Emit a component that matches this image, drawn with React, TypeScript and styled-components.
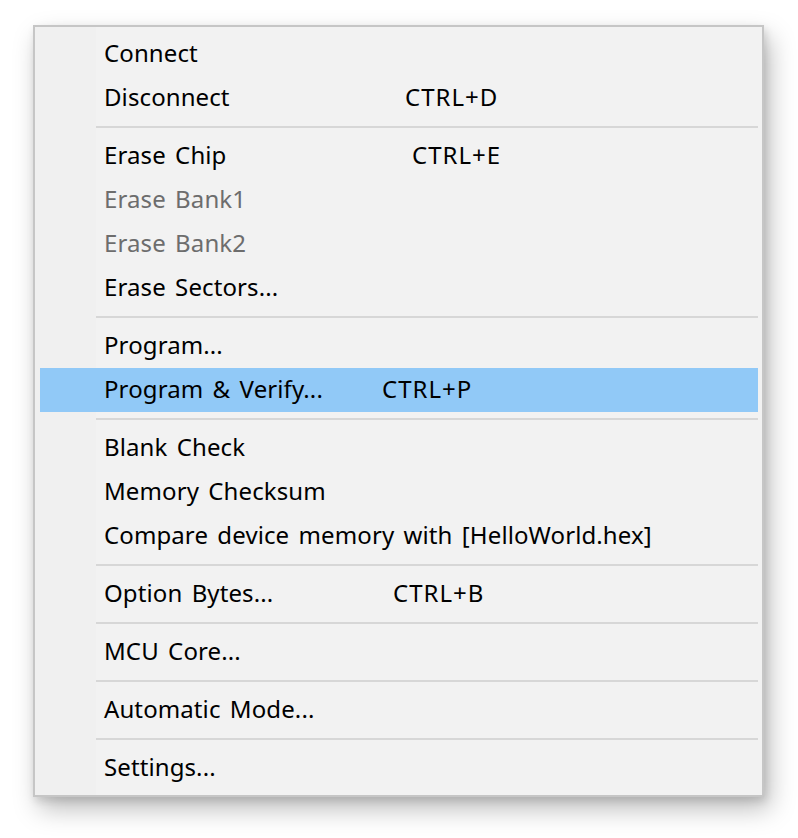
import React from "react";
import styled, { createGlobalStyle } from "styled-components";

const Global = createGlobalStyle`
  html, body { margin: 0; padding: 0; background: #ffffff; }
  body { font-family: "Noto Sans", "Open Sans", sans-serif; }
`;

const Page = styled.div`
  box-sizing: border-box;
  min-height: 838px;
  padding: 25px 0 0 33px;
`;

const Menu = styled.div`
  width: 731px;
  box-sizing: border-box;
  border: 2px solid #c6c6c6;
  background: linear-gradient(to right, #f0f0f0 0, #f0f0f0 61px, #f2f2f2 61px);
  padding: 5px 4px 5px 5px;
  box-shadow: 6px 12px 24px rgba(0, 0, 0, 0.26), 2px 4px 8px rgba(0, 0, 0, 0.12);
  display: flex;
  flex-direction: column;
`;

const Item = styled.div<{ $active?: boolean; $disabled?: boolean }>`
  height: 44px;
  box-sizing: border-box;
  display: flex;
  align-items: center;
  padding: 0 0 2px 64px;
  font-size: 24px;
  line-height: 32px;
  letter-spacing: 0.1px;
  word-spacing: 3px;
  white-space: nowrap;
  color: ${(p) => (p.$disabled ? "#6d6d6d" : "#000000")};
  background: ${(p) => (p.$active ? "#91c9f7" : "transparent")};
`;

const Label = styled.span<{ $width?: number }>`
  display: inline-block;
  min-width: ${(p) => (p.$width ? `${p.$width}px` : "0")};
`;

const Shortcut = styled.span`
  letter-spacing: 1px;
`;

const Separator = styled.div`
  height: 14px;
  display: flex;
  align-items: center;
  padding-left: 56px;
  &::after {
    content: "";
    flex: 1;
    height: 2px;
    background: #d7d7d7;
  }
`;

type Entry =
  | { sep: true }
  | { label: string; shortcut?: string; at?: number; disabled?: boolean; active?: boolean };

const entries: Entry[] = [
  { label: "Connect" },
  { label: "Disconnect", shortcut: "CTRL+D", at: 405 },
  { sep: true },
  { label: "Erase Chip", shortcut: "CTRL+E", at: 412 },
  { label: "Erase Bank1", disabled: true },
  { label: "Erase Bank2", disabled: true },
  { label: "Erase Sectors..." },
  { sep: true },
  { label: "Program..." },
  { label: "Program & Verify...", shortcut: "CTRL+P", at: 382, active: true },
  { sep: true },
  { label: "Blank Check" },
  { label: "Memory Checksum" },
  { label: "Compare device memory with [HelloWorld.hex]" },
  { sep: true },
  { label: "Option Bytes...", shortcut: "CTRL+B", at: 393 },
  { sep: true },
  { label: "MCU Core..." },
  { sep: true },
  { label: "Automatic Mode..." },
  { sep: true },
  { label: "Settings..." },
];

export default function App() {
  return (
    <Page>
      <Global />
      <Menu>
        {entries.map((e, i) =>
          "sep" in e ? (
            <Separator key={i} />
          ) : (
            <Item key={i} $active={e.active} $disabled={e.disabled}>
              <Label $width={e.at ? e.at - 104 : undefined}>{e.label}</Label>
              {e.shortcut && <Shortcut>{e.shortcut}</Shortcut>}
            </Item>
          )
        )}
      </Menu>
    </Page>
  );
}
